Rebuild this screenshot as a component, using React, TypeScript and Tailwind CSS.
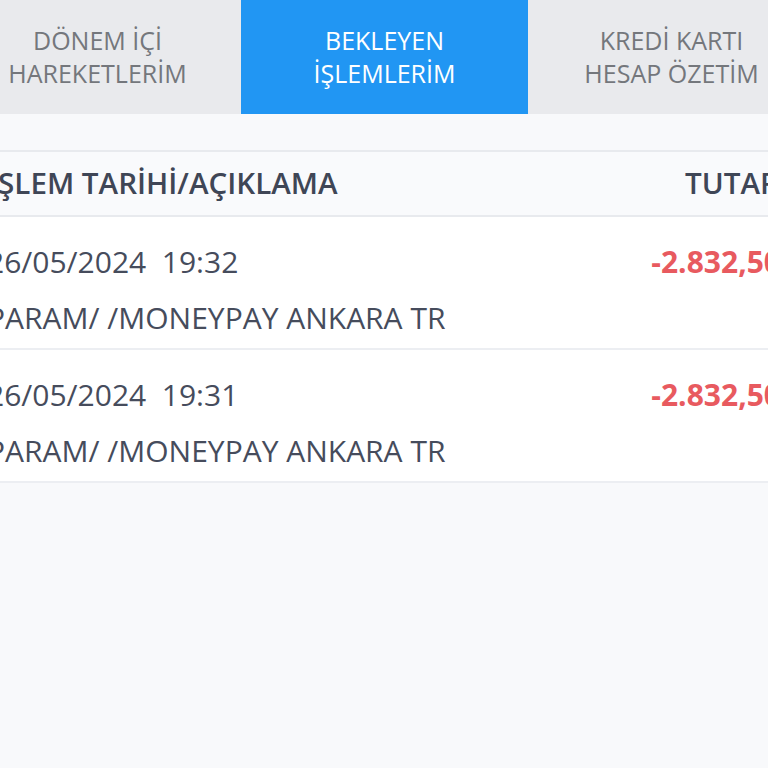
import React from "react";

const rows = [
  { date: "26/05/2024\u00a0\u00a019:32", desc: "PARAM/ /MONEYPAY ANKARA TR", amount: "-2.832,50" },
  { date: "26/05/2024\u00a0\u00a019:31", desc: "PARAM/ /MONEYPAY ANKARA TR", amount: "-2.832,50" },
];

function Tab({ l1, l2, active }: { l1: string; l2: string; active?: boolean }) {
  return (
    <div
      className={
        active
          ? "w-[287px] flex items-center justify-center bg-[#2196f3] text-white"
          : "w-[287px] flex items-center justify-center bg-[#e9eaed] text-[#74777c]"
      }
    >
      <span className="text-[25px] leading-[33px] text-center whitespace-nowrap">
        {l1}
        <br />
        {l2}
      </span>
    </div>
  );
}

export default function App() {
  return (
    <div
      className="w-[768px] h-[768px] overflow-hidden bg-[#f8f9fb]"
      style={{ fontFamily: '"Open Sans", "Noto Sans", sans-serif' }}
    >
      <div className="flex ml-[-46px] w-[861px] h-[114px]">
        <Tab l1="DÖNEM İÇİ" l2="HAREKETLERİM" />
        <Tab l1="BEKLEYEN" l2="İŞLEMLERİM" active />
        <Tab l1="KREDİ KARTI" l2="HESAP ÖZETİM" />
      </div>
      <div className="mt-[36px] ml-[-70px] w-[849px]">
        <div className="h-[67px] flex items-center justify-between pl-[59px] bg-[#f9fafc] border-y-2 border-[#e8eaee] text-[#3f4656] text-[29.6px] font-semibold">
          <span>İŞLEM TARİHİ/AÇIKLAMA</span>
          <span>TUTAR</span>
        </div>
        {rows.map((r, i) => (
          <div key={i} className="h-[133px] flex justify-between pl-[57px] bg-white border-b-2 border-[#eceef2]">
            <div className="flex flex-col pt-[27px] text-[#464c5c] text-[30px] whitespace-nowrap">
              <span className="leading-[36px]">{r.date}</span>
              <span className="leading-[36px] mt-[20px]">{r.desc}</span>
            </div>
            <div className="pt-[27px] text-[#e85a5f] text-[30px] font-bold leading-[36px] mr-[-2px]">{r.amount}</div>
          </div>
        ))}
      </div>
    </div>
  );
}
